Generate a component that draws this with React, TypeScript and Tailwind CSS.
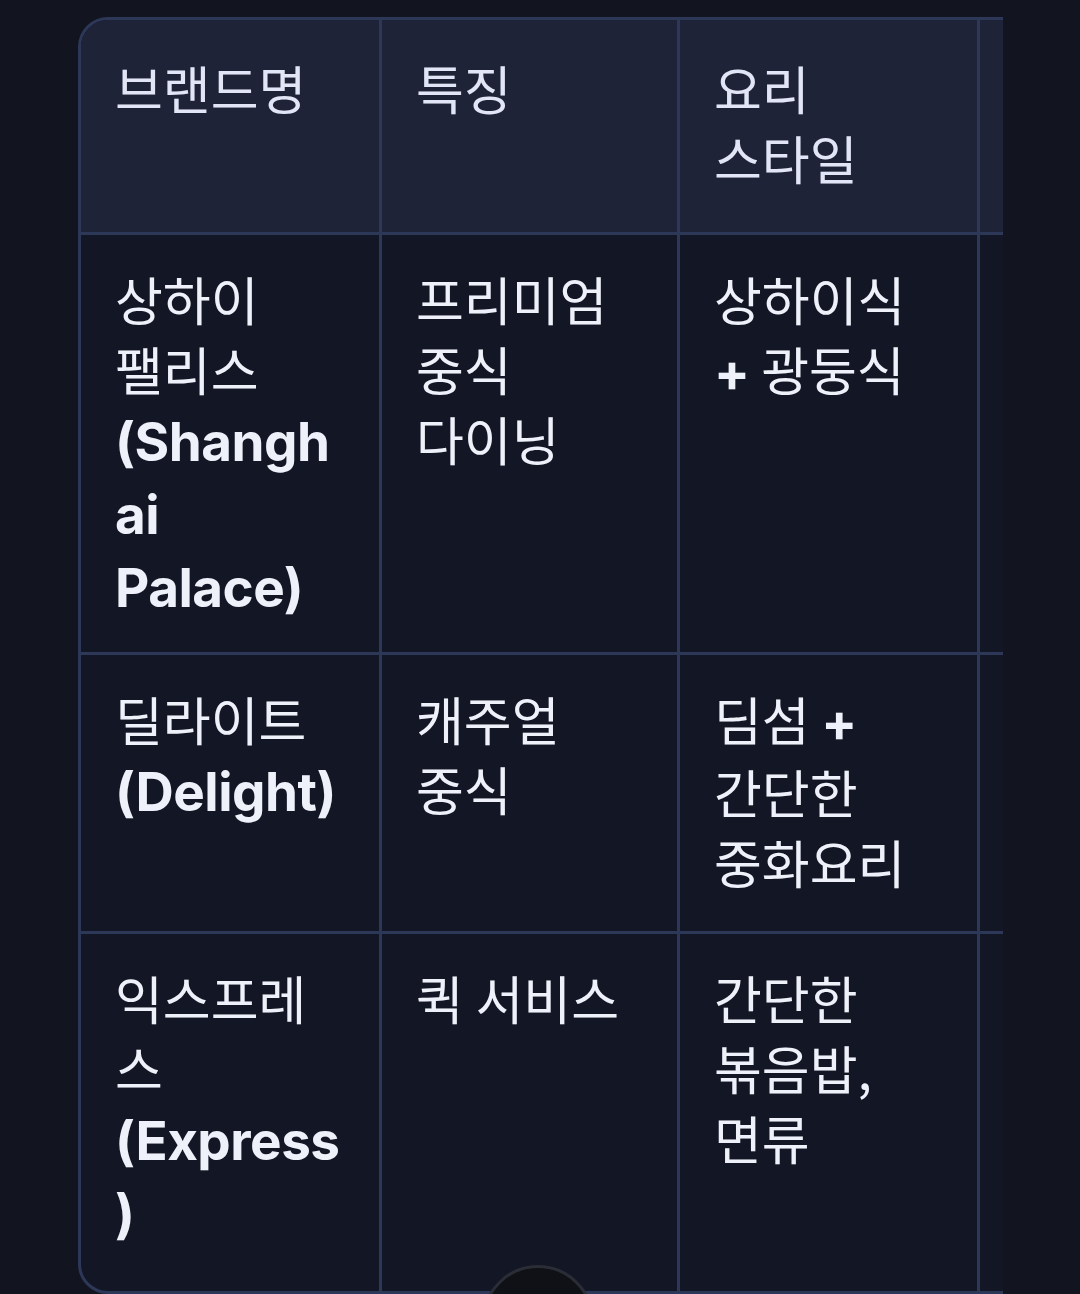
import React from 'react';

type Cell = { lines: React.ReactNode[] };

const latin = 'font-["Inter"] font-bold text-[53px] tracking-[-0.5px]';

const L = ({ children }: { children: React.ReactNode }) => (
  <span className={latin}>{children}</span>
);

const headers: string[][] = [['브랜드명'], ['특징'], ['요리', '스타일'], []];

const rows: Cell[][] = [
  [
    { lines: ['상하이', '팰리스', <L>(Shangh</L>, <L>ai</L>, <L>Palace)</L>] },
    { lines: ['프리미엄', '중식', '다이닝'] },
    { lines: ['상하이식', <><L>+</L> 광둥식</>] },
    { lines: [] },
  ],
  [
    { lines: ['딜라이트', <L>(Delight)</L>] },
    { lines: ['캐주얼', '중식'] },
    { lines: [<>딤섬 <L>+</L></>, '간단한', '중화요리'] },
    { lines: [] },
  ],
  [
    { lines: ['익스프레', '스', <L>(Express</L>, <L>)</L>] },
    { lines: ['퀵 서비스'] },
    { lines: ['간단한', '볶음밥,', '면류'] },
    { lines: [] },
  ],
];

export default function App() {
  return (
    <div className='relative h-[1294px] overflow-hidden bg-[#12141f] pl-[78px] pt-[17px] font-["Noto_Sans_CJK_KR","Noto_Sans",sans-serif]'>
      {/* horizontal scroll area, clipped on the right */}
      <div className="w-[925px] overflow-hidden">
        <div className="w-[1220px] overflow-hidden rounded-[30px] border-[3px] border-[#2d3859] bg-[#131625]">
          <div className="grid grid-cols-[301px_298px_300px_1fr] grid-rows-[215px_420px_279px_357px] text-[52px] leading-[70px]">
            {headers.map((h, i) => (
              <div
                key={i}
                className="border-b-[3px] border-r-[3px] border-[#2d3859] bg-[#1e2338] pl-[34px] pt-[33px] text-[#e1e5f5]"
              >
                {h.map((line, j) => (
                  <div key={j} className="whitespace-nowrap">
                    {line}
                  </div>
                ))}
              </div>
            ))}
            {rows.map((row, r) =>
              row.map((cell, c) => (
                <div
                  key={`${r}-${c}`}
                  className={`border-r-[3px] border-[#2d3859] pl-[34px] pt-[29px] text-[#eff1fa] ${
                    r < rows.length - 1 ? 'border-b-[3px]' : ''
                  }`}
                >
                  {cell.lines.map((line, j) => (
                    <div key={j} className="whitespace-nowrap">
                      {line}
                    </div>
                  ))}
                </div>
              ))
            )}
          </div>
        </div>
      </div>

      {/* scroll-down button peeking from the bottom */}
      <div className="absolute left-[482px] top-[1265px] h-[112px] w-[112px] rounded-full border-[3px] border-[#2b2d36] bg-[#101116]" />
    </div>
  );
}
